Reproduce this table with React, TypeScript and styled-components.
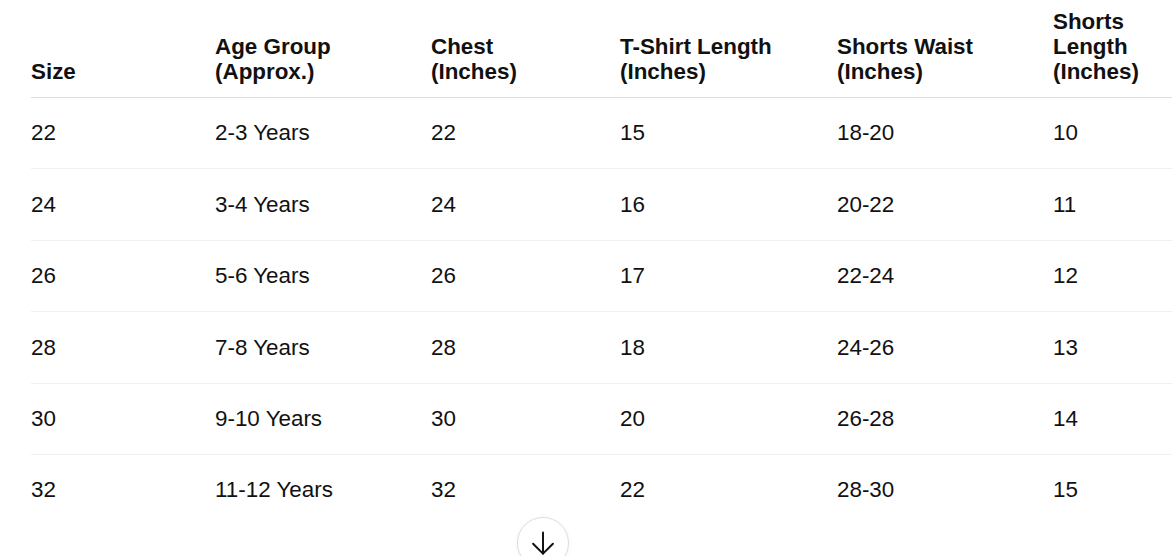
import React from 'react';
import styled, { createGlobalStyle } from 'styled-components';

interface SizeRow {
  size: string;
  age: string;
  chest: string;
  shirt: string;
  waist: string;
  shorts: string;
}

interface Column {
  key: keyof SizeRow;
  label: string[];
  width: number;
}

interface CellProps {
  $width: number;
}

const columns: Column[] = [
  { key: 'size', label: ['Size'], width: 184 },
  { key: 'age', label: ['Age Group', '(Approx.)'], width: 216 },
  { key: 'chest', label: ['Chest', '(Inches)'], width: 189 },
  { key: 'shirt', label: ['T-Shirt Length', '(Inches)'], width: 217 },
  { key: 'waist', label: ['Shorts Waist', '(Inches)'], width: 216 },
  { key: 'shorts', label: ['Shorts', 'Length', '(Inches)'], width: 119 },
];

const rows: SizeRow[] = [
  { size: '22', age: '2-3 Years', chest: '22', shirt: '15', waist: '18-20', shorts: '10' },
  { size: '24', age: '3-4 Years', chest: '24', shirt: '16', waist: '20-22', shorts: '11' },
  { size: '26', age: '5-6 Years', chest: '26', shirt: '17', waist: '22-24', shorts: '12' },
  { size: '28', age: '7-8 Years', chest: '28', shirt: '18', waist: '24-26', shorts: '13' },
  { size: '30', age: '9-10 Years', chest: '30', shirt: '20', waist: '26-28', shorts: '14' },
  { size: '32', age: '11-12 Years', chest: '32', shirt: '22', waist: '28-30', shorts: '15' },
];

const GlobalStyle = createGlobalStyle`
  html, body {
    margin: 0;
    padding: 0;
    background: #ffffff;
    overflow: hidden;
  }
  body {
    font-family: "Liberation Sans", Arial, sans-serif;
    color: #111111;
  }
`;

const Page = styled.div`
  position: relative;
  width: 1172px;
  height: 556px;
  overflow: hidden;
`;

const TableWrap = styled.div`
  padding-left: 31px;
`;

const Table = styled.table`
  border-collapse: collapse;
  table-layout: fixed;
  width: 1141px;
  font-size: 22.4px;
  line-height: 25px;
`;

const HeadCell = styled.th<CellProps>`
  width: ${(props) => props.$width}px;
  padding: 9px 0 13px 0;
  text-align: left;
  vertical-align: bottom;
  font-weight: 700;
  color: #111111;
  border-bottom: 1px solid #dcdcdc;
`;

const HeadLine = styled.span`
  display: block;
  white-space: nowrap;
`;

const BodyRow = styled.tr`
  border-bottom: 1px solid #f0f0f0;

  &:last-child {
    border-bottom: none;
  }
`;

const Cell = styled.td`
  padding: 22.4px 0 23px 0;
  font-weight: 400;
  color: #111111;
  white-space: nowrap;
`;

const ScrollButton = styled.button`
  position: absolute;
  left: 517px;
  top: 517px;
  width: 52px;
  height: 52px;
  padding: 0;
  display: flex;
  align-items: center;
  justify-content: center;
  border-radius: 50%;
  border: 1px solid #dedede;
  background: #ffffff;
  box-shadow: 0 1px 4px rgba(0, 0, 0, 0.06);
  color: #111111;
  cursor: pointer;
`;

function ArrowDown() {
  return (
    <svg width="34" height="34" viewBox="0 0 24 24" fill="none" stroke="currentColor" strokeWidth="1.4" strokeLinecap="round" strokeLinejoin="round">
      <path d="M12 4.5v15" />
      <path d="m5 12.5 7 7 7-7" />
    </svg>
  );
}

function App() {
  return (
    <Page>
      <GlobalStyle />
      <TableWrap>
        <Table>
          <thead>
            <tr>
              {columns.map((col) => (
                <HeadCell key={col.key} $width={col.width}>
                  {col.label.map((line) => (
                    <HeadLine key={line}>{line}</HeadLine>
                  ))}
                </HeadCell>
              ))}
            </tr>
          </thead>
          <tbody>
            {rows.map((row) => (
              <BodyRow key={row.size}>
                {columns.map((col) => (
                  <Cell key={col.key}>{row[col.key]}</Cell>
                ))}
              </BodyRow>
            ))}
          </tbody>
        </Table>
      </TableWrap>
      <ScrollButton aria-label="Scroll down">
        <ArrowDown />
      </ScrollButton>
    </Page>
  );
}

export default App;
